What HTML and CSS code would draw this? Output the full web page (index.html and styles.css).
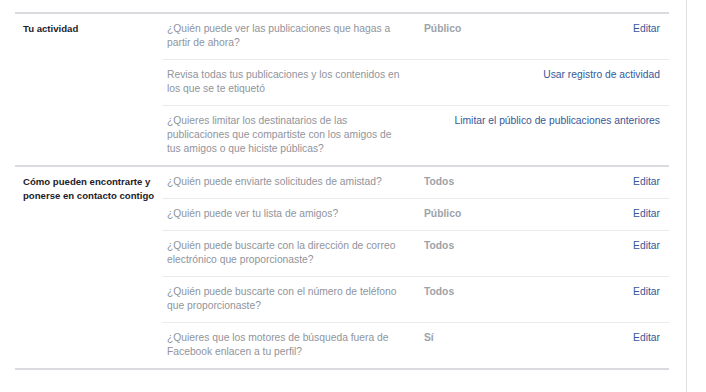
FILE: index.html
```html
<html>
<head>
    <meta name="viewport" content="width=device-width, initial-scale=1.0">
    <title>Privacidad</title>
    <link rel="stylesheet" href="styles.css">
</head>
<body>
<div class="page">
    <div class="section">
        <div class="section-label">Tu actividad</div>
        <div class="rows">
            <div class="row">
                <div class="question">¿Quién puede ver las publicaciones que hagas a partir de ahora?</div>
                <div class="value">Público</div>
                <a class="action" href="#">Editar</a>
            </div>
            <div class="row">
                <div class="question">Revisa todas tus publicaciones y los contenidos en los que se te etiquetó</div>
                <a class="action wide" href="#">Usar registro de actividad</a>
            </div>
            <div class="row">
                <div class="question">¿Quieres limitar los destinatarios de las publicaciones que compartiste con los amigos de tus amigos o que hiciste públicas?</div>
                <a class="action wide" href="#">Limitar el público de publicaciones anteriores</a>
            </div>
        </div>
    </div>
    <div class="section">
        <div class="section-label">Cómo pueden encontrarte y ponerse en contacto contigo</div>
        <div class="rows">
            <div class="row">
                <div class="question">¿Quién puede enviarte solicitudes de amistad?</div>
                <div class="value">Todos</div>
                <a class="action" href="#">Editar</a>
            </div>
            <div class="row">
                <div class="question">¿Quién puede ver tu lista de amigos?</div>
                <div class="value">Público</div>
                <a class="action" href="#">Editar</a>
            </div>
            <div class="row">
                <div class="question">¿Quién puede buscarte con la dirección de correo electrónico que proporcionaste?</div>
                <div class="value">Todos</div>
                <a class="action" href="#">Editar</a>
            </div>
            <div class="row">
                <div class="question">¿Quién puede buscarte con el número de teléfono que proporcionaste?</div>
                <div class="value">Todos</div>
                <a class="action" href="#">Editar</a>
            </div>
            <div class="row">
                <div class="question">¿Quieres que los motores de búsqueda fuera de Facebook enlacen a tu perfil?</div>
                <div class="value">Sí</div>
                <a class="action" href="#">Editar</a>
            </div>
        </div>
    </div>
</div>
</body>
</html>
```

FILE: styles.css
```css
/* Page */
body {
    margin: 0;
    background: #fff;
    font-family: "Liberation Sans", Arial, sans-serif;
    font-size: 10.3px;
    line-height: 14px;
}
.page {
    box-sizing: border-box;
    width: 687px;
    height: 100vh;
    padding: 12px 17px 0 15px;
    border-right: 1px solid #dddfe2;
}
/* Sections */
.section {
    display: flex;
    border-top: 2px solid #d9dbdf;
}
.section:last-child {
    border-bottom: 2px solid #d9dbdf;
}
.section-label {
    box-sizing: border-box;
    width: 147px;
    flex-shrink: 0;
    padding: 8px 0 0 8px;
    font-size: 9.6px;
    font-weight: bold;
    color: #1d2129;
}
.rows {
    flex: 1;
}
/* Rows */
.row {
    display: grid;
    grid-template-columns: 257px 1fr auto;
    padding: 8px 9px 9px 5px;
    border-top: 1px solid #e9ebee;
}
.row:first-child {
    border-top: none;
}
.question {
    width: 240px;
    color: #90949c;
}
.value {
    font-weight: bold;
    color: #9ea2a8;
}
.action {
    grid-column: 3;
    text-align: right;
    color: #365899;
    text-decoration: none;
    white-space: nowrap;
}
.action.wide {
    grid-column: 2 / 4;
}
```
